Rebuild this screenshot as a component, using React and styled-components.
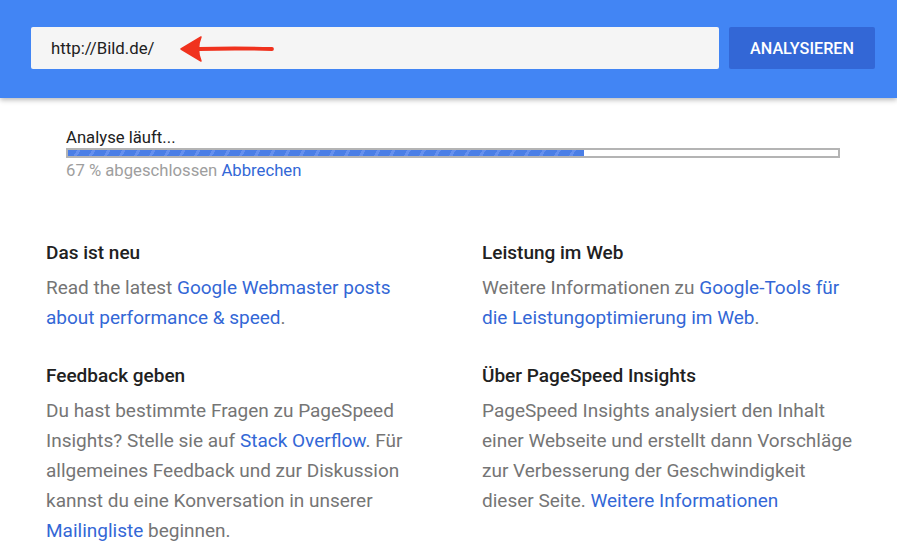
import React from 'react';
import styled, { createGlobalStyle } from 'styled-components';

const GlobalStyle = createGlobalStyle`
  body {
    margin: 0;
    background: #fff;
    font-family: Roboto, "Liberation Sans", Arial, sans-serif;
  }
`;

const Page = styled.div`
  width: 897px;
  min-height: 560px;
  overflow: hidden;
`;

const Header = styled.header`
  display: flex;
  align-items: center;
  height: 98px;
  box-sizing: border-box;
  padding: 0 22px 2px 31px;
  background: #4285f4;
  box-shadow: 0 2px 5px rgba(0, 0, 0, 0.28);
  position: relative;
`;

const UrlField = styled.div`
  flex: 1;
  display: flex;
  align-items: center;
  gap: 24px;
  height: 42px;
  padding: 0 20px;
  background: #f5f5f5;
  border-radius: 2px;
  font-size: 16.8px;
  color: #212121;
`;

const AnalyzeButton = styled.button`
  margin-left: 10px;
  width: 146px;
  height: 42px;
  border: none;
  border-radius: 2px;
  background: #3367d6;
  color: #fff;
  font-family: inherit;
  font-size: 16.2px;
  font-weight: 500;
`;

const Progress = styled.section`
  padding: 30px 0 0 66px;
  width: 774px;
`;

const ProgressLabel = styled.div`
  font-size: 16.7px;
  line-height: 20px;
  color: #212121;
`;

const Track = styled.div`
  height: 6px;
  border: 2px solid #b4b4b4;
  background: #fff;
`;

const Fill = styled.div`
  height: 100%;
  background: repeating-linear-gradient(
    -60deg,
    #4a7ee6 0 10px,
    #6690ee 10px 13px
  );
`;

const ProgressStatus = styled.div`
  margin-top: 3px;
  font-size: 16.7px;
  line-height: 20px;
  color: #9e9e9e;
`;

const Link = styled.a`
  color: #3367d6;
  text-decoration: none;
`;

const Grid = styled.div`
  display: grid;
  grid-template-columns: 376px 376px;
  column-gap: 60px;
  row-gap: 28px;
  padding: 57px 0 0 46px;
`;

const Block = styled.div``;

const Title = styled.h3`
  margin: 0 0 5px;
  font-size: 19px;
  line-height: 30px;
  font-weight: 500;
  color: #212121;
`;

const Text = styled.p`
  margin: 0;
  font-size: 19px;
  line-height: 30px;
  color: #757575;
`;

const Arrow = () => (
  <svg width="96" height="28" viewBox="0 0 96 28" style={{ marginTop: 1 }}>
    <path d="M20 14 Q55 13 93 14" stroke="#f0321e" strokeWidth="3.8" strokeLinecap="round" fill="none" />
    <path d="M2 14 L22 2 Q17 14 22 26 Z" fill="#f0321e" stroke="#f0321e" strokeWidth="1.5" strokeLinejoin="round" />
  </svg>
);

export default function App() {
  return (
    <Page>
      <GlobalStyle />
      <Header>
        <UrlField>
          <span>http://Bild.de/</span>
          <Arrow />
        </UrlField>
        <AnalyzeButton>ANALYSIEREN</AnalyzeButton>
      </Header>

      <Progress>
        <ProgressLabel>Analyse läuft...</ProgressLabel>
        <Track>
          <Fill style={{ width: '67%' }} />
        </Track>
        <ProgressStatus>
          67 % abgeschlossen <Link href="#">Abbrechen</Link>
        </ProgressStatus>
      </Progress>

      <Grid>
        <Block>
          <Title>Das ist neu</Title>
          <Text>
            Read the latest <Link href="#">Google Webmaster posts about performance &amp; speed</Link>.
          </Text>
        </Block>
        <Block>
          <Title>Leistung im Web</Title>
          <Text>
            Weitere Informationen zu <Link href="#">Google-Tools für die Leistungoptimierung im Web</Link>.
          </Text>
        </Block>
        <Block>
          <Title>Feedback geben</Title>
          <Text>
            Du hast bestimmte Fragen zu PageSpeed Insights? Stelle sie auf{' '}
            <Link href="#">Stack Overflow</Link>. Für allgemeines Feedback und zur Diskussion kannst du
            eine Konversation in unserer <Link href="#">Mailingliste</Link> beginnen.
          </Text>
        </Block>
        <Block>
          <Title>Über PageSpeed Insights</Title>
          <Text>
            PageSpeed Insights analysiert den Inhalt einer Webseite und erstellt dann Vorschläge zur
            Verbesserung der Geschwindigkeit dieser Seite. <Link href="#">Weitere Informationen</Link>
          </Text>
        </Block>
      </Grid>
    </Page>
  );
}
